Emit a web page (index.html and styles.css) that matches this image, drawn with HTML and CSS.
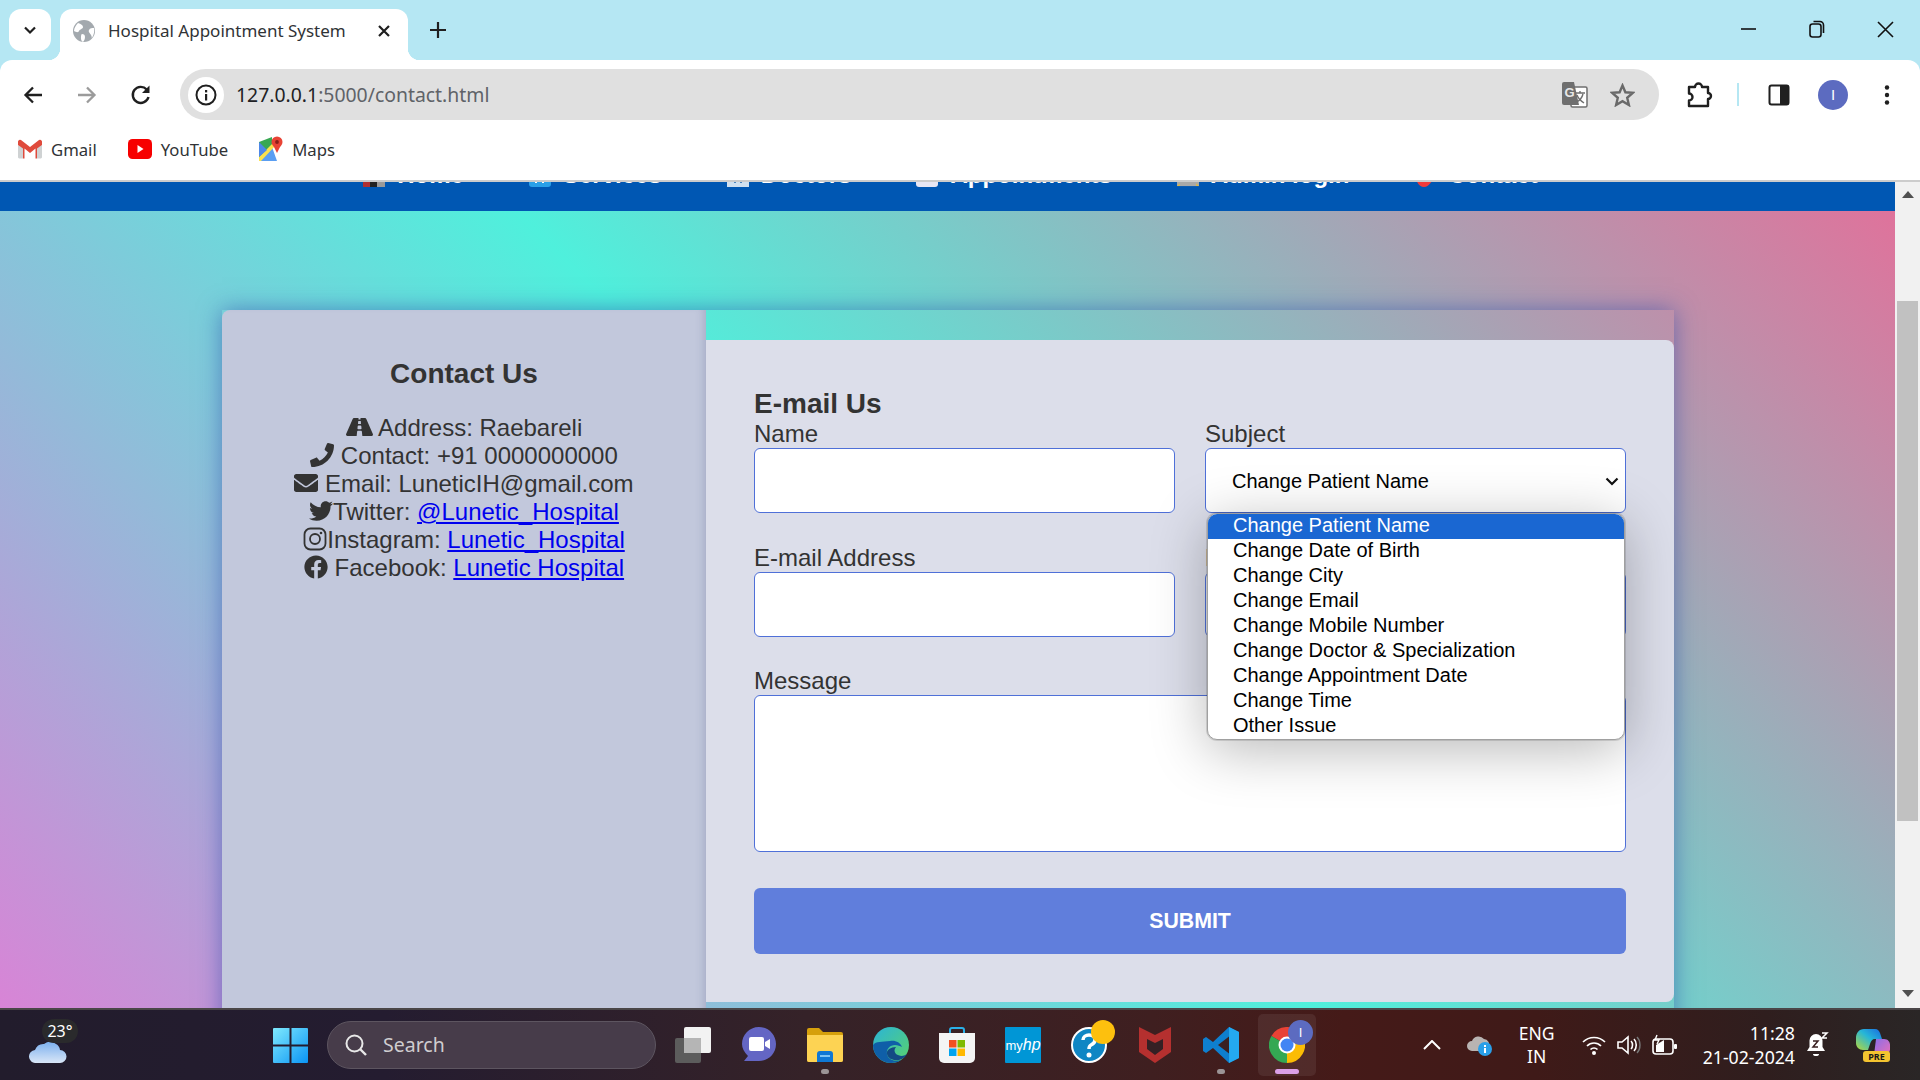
FILE: index.html
```html
<!DOCTYPE html>
<html lang="en">
<head>
  <meta charset="UTF-8">
  <meta name="viewport" content="width=device-width, initial-scale=1.0">
  <title>Hospital Appointment System</title>
  <link rel="stylesheet" href="styles.css">
</head>
<body>
<div class="screen">

  <!-- browser frame -->
  <header class="browser">
    <div class="tabstrip">
      <button class="tab-search"><svg width="16" height="16" viewBox="0 0 16 16"><path d="M3 5.5l5 5 5-5" fill="none" stroke="#1f1f1f" stroke-width="2.2"/></svg></button>
      <div class="tab">
        <svg class="favicon" width="22" height="22" viewBox="0 0 22 22"><circle cx="11" cy="11" r="11" fill="#a3a9ae"/><path d="M5 3c3 1 5 2 5 4s-3 2-4 4-3 1-5 0c0-3 2-6 4-8zM21 8c-2 0-4 0-5 2s1 3 2 5 1 3 0 4c2-2 4-7 3-11zM9 14c2 0 3 1 3 3s-1 4-2 5c-2-1-2-3-2-4s0-4 1-4z" fill="#fff"/></svg>
        <span class="tab-title">Hospital Appointment System</span>
        <svg class="tab-close" width="14" height="14" viewBox="0 0 14 14"><path d="M2 2l10 10M12 2L2 12" stroke="#1f1f1f" stroke-width="2.2"/></svg>
      </div>
      <svg class="new-tab" width="18" height="18" viewBox="0 0 18 18"><path d="M9 1v16M1 9h16" stroke="#1f1f1f" stroke-width="2.2"/></svg>
      <div class="window-controls">
        <svg width="16" height="16" viewBox="0 0 16 16"><path d="M0 8h15" stroke="#111" stroke-width="1.6"/></svg>
        <svg width="16" height="18" viewBox="0 0 16 18"><rect x="1" y="4" width="11" height="13" rx="2.5" fill="none" stroke="#111" stroke-width="1.6"/><path d="M4.5 1.5h6.5a3.5 3.5 0 0 1 3.5 3.5v8" fill="none" stroke="#111" stroke-width="1.6"/></svg>
        <svg width="17" height="17" viewBox="0 0 17 17"><path d="M1 1l15 15M16 1L1 16" stroke="#111" stroke-width="1.6"/></svg>
      </div>
    </div>

    <div class="toolbar">
      <svg class="nav-btn" width="22" height="22" viewBox="0 0 22 22"><path d="M20 11H4M11 3.5L3.5 11l7.5 7.5" fill="none" stroke="#1f1f1f" stroke-width="2.3"/></svg>
      <svg class="nav-btn" width="22" height="22" viewBox="0 0 22 22"><path d="M2 11h16M11 3.5l7.5 7.5-7.5 7.5" fill="none" stroke="#9b9b9b" stroke-width="2.3"/></svg>
      <svg class="nav-btn" width="22" height="22" viewBox="0 0 22 22"><path d="M18.5 13a8 8 0 1 1-1.8-7.5" fill="none" stroke="#1f1f1f" stroke-width="2.4"/><path d="M19.5 1.5V9H12z" fill="#1f1f1f"/></svg>
      <div class="omnibox">
        <span class="site-info"><svg width="22" height="22" viewBox="0 0 22 22"><circle cx="11" cy="11" r="9.5" fill="none" stroke="#1f1f1f" stroke-width="2"/><rect x="10" y="10" width="2.2" height="6.5" fill="#1f1f1f"/><rect x="10" y="6" width="2.2" height="2.4" fill="#1f1f1f"/></svg></span>
        <span class="url"><span class="url-host">127.0.0.1</span>:5000/contact.html</span>
        <svg class="translate" width="26" height="28" viewBox="0 0 26 28"><rect x="9" y="6" width="16" height="20" rx="1.5" fill="#fff" stroke="#6f6f6f" stroke-width="1.5"/><path d="M2 1h10l5 23H2a2 2 0 0 1-2-2V3a2 2 0 0 1 2-2z" fill="#6f6f6f"/><text x="2.5" y="16" class="translate-g">G</text><path d="M13 12h10M18 10v2M21 13c-1 4-4 7-7 8M15 14c1 3 4 6 7 8" fill="none" stroke="#6f6f6f" stroke-width="1.4"/></svg>
        <svg class="star" width="25" height="24" viewBox="0 0 25 24"><path d="M12.5 2.5l2.9 6.800 7.400.6-5.600 4.900 1.700 7.200-6.400-3.800-6.400 3.800 1.700-7.200-5.600-4.900 7.400-.6z" fill="none" stroke="#6a6a6a" stroke-width="2.4"/></svg>
      </div>
      <svg class="puzzle" width="26" height="26" viewBox="0 0 26 26"><path d="M2 5h6a3.5 3.5 0 0 1 7 0h6v6a3 3 0 0 1 0 6v7H2v-5.500a3.500 3.500 0 0 0 0-7z" fill="none" stroke="#1f1f1f" stroke-width="2.4" stroke-linejoin="round"/></svg>
      <span class="toolbar-divider"></span>
      <svg class="side-panel" width="22" height="22" viewBox="0 0 22 22"><rect x="1.5" y="1.5" width="19" height="19" rx="2" fill="none" stroke="#1f1f1f" stroke-width="2"/><rect x="12" y="1.5" width="8.5" height="19" fill="#1f1f1f"/></svg>
      <span class="avatar">I</span>
      <svg class="kebab" width="6" height="22" viewBox="0 0 6 22"><circle cx="3" cy="3.5" r="2.2" fill="#1f1f1f"/><circle cx="3" cy="11" r="2.2" fill="#1f1f1f"/><circle cx="3" cy="18.5" r="2.2" fill="#1f1f1f"/></svg>
    </div>

    <div class="bookmarks">
      <a class="bookmark">
        <svg width="24" height="20" viewBox="0 0 24 20"><path d="M1 19.5h4V9L0 6v12.500zM23 19.5h-4V9l5-3v12.500z" fill="#cfd2d3"/><path d="M0 2.500A2 2 0 0 1 3 1l9 7 9-7a2 2 0 0 1 3 1.500V6l-5 3.500v10h-1.500V9.500L12 14 6.500 9.500v10H5v-10L0 6z" fill="#df4a3c"/></svg>
        Gmail
      </a>
      <a class="bookmark">
        <svg width="24" height="20" viewBox="0 0 24 20"><rect width="24" height="20" rx="4.5" fill="#f70000"/><path d="M9.5 6l6 4-6 4z" fill="#fff"/></svg>
        YouTube
      </a>
      <a class="bookmark">
        <svg width="24" height="26" viewBox="0 0 24 26"><path d="M0 6l13-5v24H0z" fill="#38a852"/><path d="M0 25l13-14 5 14z" fill="#5a9ef2"/><path d="M0 21L15 6l2 3L2 25H0z" fill="#fbe14d"/><path d="M0 6l8 8-8 7z" fill="#4d88e8"/><circle cx="18" cy="6" r="5.5" fill="#e84335"/><path d="M14 9l4 8 4-8z" fill="#e84335"/><circle cx="18" cy="6" r="1.9" fill="#8a1f17"/></svg>
        Maps
      </a>
    </div>
  </header>

  <!-- page, scrolled a little down -->
  <div class="viewport">
    <div class="page">
      <nav class="site-nav">
        <a class="nav-item"><svg class="nav-icon" viewBox="0 0 22 22"><rect width="7" height="22" fill="#b03030"/><rect x="7" width="7" height="22" fill="#222"/><rect x="14" width="8" height="22" fill="#999"/></svg>Home</a>
        <a class="nav-item"><svg class="nav-icon" viewBox="0 0 22 22"><rect width="22" height="22" rx="3" fill="#2aa0e8"/><path d="M7 0v18M14 0v18" stroke="#fff" stroke-width="2"/></svg>Services</a>
        <a class="nav-item"><svg class="nav-icon" viewBox="0 0 22 22"><rect width="22" height="22" fill="#cfe0f0"/><path d="M8 0v18M14 0v18" stroke="#4a86c0" stroke-width="2"/></svg>Doctors</a>
        <a class="nav-item"><svg class="nav-icon" viewBox="0 0 22 22"><rect width="22" height="22" rx="3" fill="#e6e6f4"/><path d="M5 16h12" stroke="#777" stroke-width="2" stroke-dasharray="2 2"/></svg>Appointments</a>
        <a class="nav-item"><svg class="nav-icon" viewBox="0 0 24 22"><rect width="24" height="22" fill="#a8a8a8"/><path d="M0 22l3-3v3zM24 22l-3-3v3z" fill="#e2b93b"/></svg>Admin login</a>
        <a class="nav-item"><svg class="nav-icon" viewBox="0 0 22 22"><path d="M0 0h22c0 12-6 22-12 22C4 22 0 14 0 0z" fill="#f03a3a"/></svg>Contact</a>
      </nav>

      <main class="contact-wrap">
        <section class="contact-info">
          <h3>Contact Us</h3>
          <p class="info-line"><svg class="fa road" viewBox="0 0 576 512"><path d="M573.19 402.67l-139.79-320C428.43 71.29 417.6 64 405.68 64h-97.59l2.45 23.16c.5 4.72-3.21 8.84-7.96 8.84h-29.16c-4.75 0-8.46-4.12-7.96-8.84L267.91 64h-97.59c-11.93 0-22.76 7.29-27.73 18.67L2.8 402.67C-6.45 423.86 8.31 448 30.54 448h196.84l10.31-97.68c.86-8.14 7.72-14.32 15.91-14.32h68.8c8.19 0 15.05 6.18 15.91 14.32L348.62 448h196.84c22.23 0 36.99-24.14 27.73-45.33zM260.4 135.16a8 8 0 0 1 7.96-7.16h39.29c4.09 0 7.53 3.09 7.96 7.16l4.6 43.58c.75 7.09-4.81 13.26-11.93 13.26h-40.54c-7.13 0-12.68-6.17-11.93-13.26l4.6-43.58zM315.64 304h-55.29c-9.5 0-16.91-8.23-15.9-17.68l5.07-48c.86-8.14 7.72-14.32 15.91-14.32h45.15c8.19 0 15.05 6.18 15.91 14.32l5.07 48c1 9.45-6.41 17.68-15.92 17.68z"/></svg> Address: Raebareli</p>
          <p class="info-line"><svg class="fa" viewBox="0 0 512 512"><path d="M493.4 24.6l-104-24c-11.3-2.6-22.9 3.3-27.5 13.9l-48 112c-4.2 9.8-1.4 21.3 6.9 28l60.6 49.6c-36 76.7-98.9 140.5-177.2 177.2l-49.6-60.6c-6.8-8.3-18.2-11.1-28-6.9l-112 48C3.9 366.5-2 378.1.6 389.4l24 104C27.1 504.2 36.7 512 48 512c256.1 0 464-207.5 464-464 0-11.2-7.7-20.9-18.6-23.4z"/></svg> Contact: +91 0000000000</p>
          <p class="info-line"><svg class="fa" viewBox="0 0 512 512"><path d="M502.3 190.8c3.9-3.1 9.7-.2 9.7 4.7V400c0 26.5-21.5 48-48 48H48c-26.5 0-48-21.5-48-48V195.6c0-5 5.7-7.8 9.7-4.7 22.4 17.4 52.1 39.5 154.1 113.6 21.1 15.4 56.7 47.8 92.2 47.6 35.7.3 72-32.8 92.3-47.6 102-74.1 131.6-96.3 154-113.7zM256 320c23.2.4 56.6-29.2 73.4-41.4 132.7-96.3 142.8-104.7 173.4-128.7 5.8-4.5 9.2-11.5 9.2-18.9v-19c0-26.5-21.5-48-48-48H48C21.5 64 0 85.5 0 112v19c0 7.4 3.4 14.3 9.2 18.9 30.6 23.9 40.7 32.4 173.4 128.7 16.8 12.2 50.2 41.8 73.4 41.4z"/></svg> Email: LuneticIH@gmail.com</p>
          <p class="info-line"><svg class="fa" viewBox="0 0 512 512"><path d="M459.37 151.716c.325 4.548.325 9.097.325 13.645 0 138.72-105.583 298.558-298.558 298.558-59.452 0-114.68-17.219-161.137-47.106 8.447.974 16.568 1.299 25.34 1.299 49.055 0 94.213-16.568 130.274-44.832-46.132-.975-84.792-31.188-98.112-72.772 6.498.974 12.995 1.624 19.818 1.624 9.421 0 18.843-1.3 27.614-3.573-48.081-9.747-84.143-51.98-84.143-102.985v-1.299c13.969 7.797 30.214 12.67 47.431 13.319-28.264-18.843-46.781-51.005-46.781-87.391 0-19.492 5.197-37.36 14.294-52.954 51.655 63.675 129.3 105.258 216.365 109.807-1.624-7.797-2.599-15.918-2.599-24.04 0-57.828 46.782-104.934 104.934-104.934 30.213 0 57.502 12.67 76.67 33.137 23.715-4.548 46.456-13.32 66.599-25.34-7.798 24.366-24.366 44.833-46.132 57.827 21.117-2.273 41.584-8.122 60.426-16.243-14.292 20.791-32.161 39.308-52.628 54.253z"/></svg>Twitter: <a href="#">@Lunetic_Hospital</a></p>
          <p class="info-line"><svg class="fa" viewBox="0 0 24 24"><rect x="1.5" y="1.5" width="21" height="21" rx="6" fill="none" stroke="#333" stroke-width="1.8"/><circle cx="12" cy="12" r="5" fill="none" stroke="#333" stroke-width="1.8"/><circle cx="18" cy="6" r="1.3"/></svg>Instagram: <a href="#">Lunetic_Hospital</a></p>
          <p class="info-line"><svg class="fa" viewBox="0 0 512 512"><path d="M504 256C504 119 393 8 256 8S8 119 8 256c0 123.78 90.69 226.38 209.25 245V327.69h-63V256h63v-54.64c0-62.15 37-96.48 93.67-96.48 27.14 0 55.52 4.84 55.52 4.84v61h-31.28c-30.8 0-40.41 19.12-40.41 38.73V256h68.78l-11 71.69h-57.78V501C413.31 482.38 504 379.78 504 256z"/></svg> Facebook: <a href="#">Lunetic Hospital</a></p>
        </section>

        <section class="contact-form">
          <h3>E-mail Us</h3>
          <form class="form-grid">
            <div class="field">
              <label>Name</label>
              <input type="text">
            </div>
            <div class="field subject-field">
              <label>Subject</label>
              <select>
                <option>Change Patient Name</option>
              </select>
              <svg class="select-arrow" width="14" height="9" viewBox="0 0 14 9"><path d="M1.5 1.5L7 7l5.500-5.500" fill="none" stroke="#111" stroke-width="2.2"/></svg>
              <!-- the open list of the select -->
              <ul class="select-popup">
                <li class="selected">Change Patient Name</li>
                <li>Change Date of Birth</li>
                <li>Change City</li>
                <li>Change Email</li>
                <li>Change Mobile Number</li>
                <li>Change Doctor &amp; Specialization</li>
                <li>Change Appointment Date</li>
                <li>Change Time</li>
                <li>Other Issue</li>
              </ul>
            </div>
            <div class="field">
              <label>E-mail Address</label>
              <input type="text">
            </div>
            <div class="field">
              <label>Phone</label>
              <input type="text">
            </div>
            <div class="field field-wide">
              <label>Message</label>
              <textarea></textarea>
            </div>
            <button type="button" class="submit-btn">SUBMIT</button>
          </form>
        </section>
      </main>
    </div>

    <div class="scrollbar">
      <span class="arrow-up"></span>
      <span class="thumb"></span>
      <span class="arrow-down"></span>
    </div>
  </div>

  <!-- windows taskbar -->
  <footer class="taskbar">
    <div class="weather">
      <span class="temp">23°</span>
      <svg class="weather-cloud" width="38" height="24" viewBox="0 0 38 24"><defs><linearGradient id="cloud" x1="0" y1="0" x2="0" y2="1"><stop offset="0" stop-color="#7cb0ee"/><stop offset="1" stop-color="#d9e6f7"/></linearGradient></defs><path d="M7 24a6.5 6.5 0 0 1-1-13 9 9 0 0 1 9-6 10 10 0 0 1 12 0 8 8 0 0 1 4 6 6.5 6.5 0 0 1 0 13z" fill="url(#cloud)"/></svg>
    </div>
    <div class="start-btn">
      <svg width="35" height="35" viewBox="0 0 35 35"><defs><linearGradient id="win" x1="0" y1="0" x2="1" y2="1"><stop offset="0" stop-color="#7fe9fd"/><stop offset="1" stop-color="#0a94f5"/></linearGradient></defs><path d="M0 1a1 1 0 0 1 1-1h15.500v16.500H0zM18.500 0H34a1 1 0 0 1 1 1v15.500H18.500zM0 18.500h16.500V35H1a1 1 0 0 1-1-1zM18.500 18.500H35V34a1 1 0 0 1-1 1H18.500z" fill="url(#win)"/></svg>
    </div>
    <div class="search-box">
      <svg width="24" height="24" viewBox="0 0 24 24"><circle cx="10.5" cy="10.5" r="8" fill="none" stroke="#e8e8e8" stroke-width="2"/><path d="M16 16l6 6" stroke="#e8e8e8" stroke-width="2.4"/></svg>
      <span>Search</span>
    </div>
    <div class="task-icons">
      <div class="task-btn">
        <svg width="36" height="36" viewBox="0 0 36 36"><rect y="11" width="26" height="25" rx="2" fill="#5c5c5c"/><rect x="9" width="27" height="26" rx="2" fill="#f2f2f2"/><rect x="9" y="11" width="17" height="15" fill="#b5b5b5"/></svg>
      </div>
      <div class="task-btn">
        <svg width="34" height="36" viewBox="0 0 34 36"><path d="M17 0c10 0 17 8 17 17 0 10-8 17-17 17H2l4-5C2 25 0 21 0 17 0 8 7 0 17 0z" fill="#6466c4"/><rect x="7" y="10" width="15" height="14" rx="2" fill="#fff"/><path d="M23 15l5-3v10l-5-3z" fill="#fff"/></svg>
      </div>
      <div class="task-btn running">
        <svg width="36" height="34" viewBox="0 0 36 34"><path d="M0 2a2 2 0 0 1 2-2h10l4 4h18a2 2 0 0 1 2 2v26a2 2 0 0 1-2 2H2a2 2 0 0 1-2-2z" fill="#d6a00c"/><path d="M0 7h36v25a2 2 0 0 1-2 2H2a2 2 0 0 1-2-2z" fill="#fdd353"/><path d="M10 34v-8a3 3 0 0 1 3-3h10a3 3 0 0 1 3 3v8z" fill="#0f78d4"/><rect x="13" y="27" width="10" height="2" fill="#7cc4f4"/></svg>
      </div>
      <div class="task-btn">
        <svg width="36" height="36" viewBox="0 0 36 36"><defs><linearGradient id="edge" x1="0" y1="0" x2="1" y2="1"><stop offset="0" stop-color="#2bb4d8"/><stop offset="1" stop-color="#5ad36a"/></linearGradient></defs><circle cx="18" cy="18" r="18" fill="url(#edge)"/><path d="M0 18C0 28 8 36 18 36c4 0 8-1 10-3-6 2-13 0-14-6-1-5 3-9 8-9 3 0 5 1 7 2-2-5-7-7-12-6C9 15 3 14 0 18z" fill="#0f5fa8"/><path d="M14 27c1 5 7 7 12 6 4-1 7-4 8-6-4 3-8 2-11 0-2-2-2-5 0-7-5 0-10 3-9 7z" fill="#134a84"/></svg>
      </div>
      <div class="task-btn">
        <svg width="36" height="36" viewBox="0 0 36 36"><path d="M11 8V3a2 2 0 0 1 2-2h10a2 2 0 0 1 2 2v5" fill="none" stroke="#2ab0e8" stroke-width="2"/><path d="M0 6h36v25a5 5 0 0 1-5 5H5a5 5 0 0 1-5-5z" fill="#f4f4f4"/><rect x="10" y="13" width="7.5" height="7.5" fill="#f25022"/><rect x="18.5" y="13" width="7.5" height="7.5" fill="#7fba00"/><rect x="10" y="21.5" width="7.5" height="7.5" fill="#00a4ef"/><rect x="18.5" y="21.5" width="7.5" height="7.5" fill="#ffb900"/></svg>
      </div>
      <div class="task-btn">
        <div class="myhp"><span class="my">my</span><span class="hp">hp</span></div>
      </div>
      <div class="task-btn">
        <span class="icon-wrap">
          <svg width="36" height="36" viewBox="0 0 36 36"><circle cx="18" cy="18" r="17" fill="#0f86c4" stroke="#fff" stroke-width="2"/><path d="M12 13c0-3 3-5 6-5s6 2 6 5-2 4-4 5-2 2-2 4" fill="none" stroke="#fff" stroke-width="3.5"/><circle cx="18" cy="28" r="2.5" fill="#fff"/></svg>
          <span class="help-badge"></span>
        </span>
      </div>
      <div class="task-btn">
        <svg width="32" height="36" viewBox="0 0 32 36"><path d="M0 0l16 8 16-8v25L16 36 0 25z" fill="#b5302f"/><path d="M8 12l8 4 8-4v10l-8 6-8-6z" fill="#352024"/></svg>
      </div>
      <div class="task-btn running">
        <svg width="36" height="36" viewBox="0 0 36 36"><path d="M26 0l10 5v26l-10 5L10 21l-7 5-3-2v-12l3-2 7 5z" fill="#0e7fcf"/><path d="M26 0l10 5v26l-10 5z" fill="#24a9f0"/><path d="M26 9.5L15 18l11 8.5z" fill="#3a2122"/></svg>
      </div>
      <div class="task-btn active">
        <span class="icon-wrap">
          <svg width="36" height="36" viewBox="0 0 36 36"><path d="M18 18L2.4 9A18 18 0 0 1 33.6 9z" fill="#e94235"/><path d="M18 18L33.6 9A18 18 0 0 1 18 36z" fill="#fbbc04"/><path d="M18 18L18 36A18 18 0 0 1 2.4 9z" fill="#34a853"/><circle cx="18" cy="18" r="8.5" fill="#fff"/><circle cx="18" cy="18" r="6.5" fill="#4285f4"/></svg>
          <span class="chrome-badge">I</span>
        </span>
      </div>
    </div>

    <div class="tray">
      <svg class="tray-chevron" width="18" height="10" viewBox="0 0 18 10"><path d="M1 9l8-8 8 8" fill="none" stroke="#fff" stroke-width="2"/></svg>
      <span class="tray-cloud">
        <svg width="26" height="24" viewBox="0 0 26 24"><path d="M5 18a5 5 0 0 1 0-10 7 7 0 0 1 12-2 6 6 0 0 1 5 8v4z" fill="#b9b4b2"/><circle cx="18" cy="16" r="7" fill="#2a9fe8"/><rect x="17" y="15" width="2" height="5" fill="#fff"/><rect x="17" y="12" width="2" height="2" fill="#fff"/></svg>
      </span>
      <div class="lang">ENG<br>IN</div>
      <svg class="tray-icon" width="24" height="20" viewBox="0 0 24 20"><path d="M1 7c6-6 16-6 22 0M5 11c4-4 10-4 14 0M8.5 14.5c2-2 5-2 7 0" fill="none" stroke="#fff" stroke-width="1.7"/><circle cx="12" cy="18" r="2" fill="#fff"/></svg>
      <svg class="tray-icon" width="24" height="20" viewBox="0 0 24 20"><path d="M1 7h4l6-5v16l-6-5H1z" fill="none" stroke="#fff" stroke-width="1.6"/><path d="M14 6c2 2 2 6 0 8M17 4c3 3 3 9 0 12" fill="none" stroke="#fff" stroke-width="1.6"/><path d="M20 2c4 4 4 12 0 16" fill="none" stroke="#777" stroke-width="1.4"/></svg>
      <svg class="tray-icon" width="26" height="22" viewBox="0 0 26 22"><rect x="1" y="5" width="20" height="15" rx="3" fill="none" stroke="#fff" stroke-width="1.6"/><rect x="22" y="10" width="3" height="5" rx="1" fill="#fff"/><path d="M4 18V11l8-5v12z" fill="#fff"/><path d="M5 1L3 6h4L5 10" fill="none" stroke="#fff" stroke-width="1.4"/></svg>
      <div class="clock"><span>11:28</span><span>21-02-2024</span></div>
      <svg class="bell" width="22" height="26" viewBox="0 0 22 26"><path d="M9 2a6.5 6.5 0 0 0-6.500 6.500V15L0 19h18l-2.500-4V8.500A6.500 6.500 0 0 0 9 2z" fill="#fff"/><path d="M6 22h6a3 2 0 0 1-6 0z" fill="#fff"/><path d="M6 9h5l-5 6h5" fill="none" stroke="#3a2020" stroke-width="1.5"/><path d="M15 1h5l-5 5h5" fill="none" stroke="#fff" stroke-width="1.5"/></svg>
      <span class="copilot">
        <svg width="34" height="26" viewBox="0 0 34 26"><defs><linearGradient id="cop-a" x1="0" y1="1" x2="1" y2="0"><stop offset="0" stop-color="#b6d83a"/><stop offset=".55" stop-color="#26b6d8"/><stop offset="1" stop-color="#1a68e0"/></linearGradient><linearGradient id="cop-b" x1="0" y1="0" x2="1" y2="1"><stop offset="0" stop-color="#8a6ee8"/><stop offset="1" stop-color="#e870b8"/></linearGradient></defs><path d="M20 10h8c4 0 6 3 6 6v4c0 3-2 6-6 6H18z" fill="url(#cop-b)"/><path d="M8 0h11c3 0 4 2 5 4l2 6h-7c-3 0-4 2-5 5l-2 6H7c-4 0-7-3-7-7V9c0-5 3-9 8-9z" fill="url(#cop-a)"/></svg>
        <span class="pre-badge">PRE</span>
      </span>
    </div>
  </footer>
</div>
</body>
</html>
```
FILE: styles.css
```css
* {
  box-sizing: border-box;
}

html, body {
  margin: 0;
  height: 100%;
  overflow: hidden;
}

body {
  font-family: "Liberation Sans", Arial, sans-serif;
}

.screen {
  display: flex;
  flex-direction: column;
  height: 100vh;
}

/* browser frame */
.browser {
  flex: none;
  background-color: #b5e7f3;
  font-family: "Noto Sans", sans-serif;
}

.tabstrip {
  display: flex;
  align-items: flex-end;
  height: 60px;
  padding-left: 9px;
}

.tab-search {
  width: 42px;
  height: 42px;
  margin-bottom: 9px;
  padding: 0;
  border: none;
  border-radius: 12px;
  background-color: #fff;
  display: flex;
  align-items: center;
  justify-content: center;
}

.tab {
  position: relative;
  display: flex;
  align-items: center;
  width: 348px;
  height: 51px;
  margin-left: 9px;
  padding: 0 17px 8px 13px;
  background-color: #fff;
  border-radius: 12px 12px 0 0;
}

.tab::before,
.tab::after {
  content: "";
  position: absolute;
  bottom: 0;
  width: 12px;
  height: 12px;
}

.tab::before {
  left: -12px;
  background: radial-gradient(circle at 0 0, transparent 12px, #fff 12.5px);
}

.tab::after {
  right: -12px;
  background: radial-gradient(circle at 100% 0, transparent 12px, #fff 12.5px);
}

.tab-title {
  flex: 1;
  margin-left: 13px;
  font-size: 17px;
  color: #303336;
  white-space: nowrap;
}

.new-tab {
  margin: 0 0 21px 21px;
}

.window-controls {
  display: flex;
  align-items: center;
  gap: 52px;
  margin-left: auto;
  margin-right: 26px;
  height: 60px;
  padding-bottom: 2px;
}

.toolbar {
  display: flex;
  align-items: center;
  height: 60px;
  padding: 9px 0 0 22px;
  background-color: #fff;
  border-radius: 12px 12px 0 0;
}

.nav-btn {
  margin-right: 32px;
}

.nav-btn:nth-child(3) {
  margin-right: 28px;
}

.omnibox {
  display: flex;
  align-items: center;
  width: 1479px;
  height: 51px;
  padding-left: 8px;
  background-color: #e0e0e0;
  border-radius: 26px;
}

.site-info {
  display: flex;
  align-items: center;
  justify-content: center;
  width: 36px;
  height: 36px;
  background-color: #fff;
  border-radius: 50%;
}

.url {
  margin-left: 12px;
  font-size: 19.4px;
  color: #5f6368;
  white-space: nowrap;
}

.url-host {
  color: #202124;
}

.translate {
  margin-left: auto;
}

.translate-g {
  font-family: "Liberation Sans", sans-serif;
  font-size: 13px;
  font-weight: bold;
  fill: #e8e8e8;
}

.star {
  margin: 0 24px 0 22px;
}

.puzzle {
  margin-left: 28px;
}

.toolbar-divider {
  width: 2px;
  height: 23px;
  margin-left: 24px;
  background-color: #b5e7f3;
}

.side-panel {
  margin-left: 29px;
}

.avatar {
  display: flex;
  align-items: center;
  justify-content: center;
  width: 30px;
  height: 30px;
  margin-left: 28px;
  border-radius: 50%;
  background-color: #5c6bc0;
  color: #fff;
  font-family: "Liberation Sans", sans-serif;
  font-size: 15px;
}

.kebab {
  margin-left: 36px;
}

.bookmarks {
  display: flex;
  align-items: center;
  height: 62px;
  padding: 0 0 2px 18px;
  background-color: #fff;
  border-bottom: 2px solid #ccc;
}

.bookmark {
  display: flex;
  align-items: center;
  gap: 9px;
  margin-right: 31px;
  font-size: 16.7px;
  color: #303336;
}

/* page */
.viewport {
  flex: 1;
  min-height: 0;
  display: flex;
}

.page {
  flex: 1;
  min-width: 0;
  overflow: hidden;
  background: linear-gradient(45deg, #d884d6, #4ff0dc 48.3%, #e2709a);
}

.site-nav {
  height: 29px;
  overflow: hidden;
  display: flex;
  justify-content: center;
  gap: 65px;
  padding-left: 6px;
  background-color: #0057b3;
}

.nav-item {
  flex: none;
  display: flex;
  align-items: baseline;
  gap: 12px;
  height: 32px;
  margin-top: -23px;
  color: #fff;
  font-size: 24px;
  font-weight: bold;
  line-height: 32px;
}

.nav-icon {
  width: 22px;
  height: 22px;
  transform: translateY(4px);
}

.contact-wrap {
  display: flex;
  width: 1452px;
  height: 780px;
  margin: 99px 0 0 222px;
  box-shadow: 0 0 22px rgba(40, 70, 170, 0.55);
  color: #333;
}

.contact-info {
  flex: 0 0 484px;
  padding-top: 48px;
  background-color: #c2c8dc;
  border-radius: 8px 0 0 0;
  box-shadow: inset -8px 0 8px -6px rgba(60, 70, 120, 0.22);
  text-align: center;
}

.contact-info h3,
.contact-form h3 {
  margin: 0;
  font-size: 28px;
  line-height: 32px;
  font-weight: bold;
}

.contact-info h3 {
  margin-bottom: 24px;
}

.info-line {
  margin: 0;
  font-size: 24px;
  line-height: 28px;
  white-space: nowrap;
}

.info-line a {
  color: #0000ee;
}

.fa {
  width: 24px;
  height: 24px;
  vertical-align: -3px;
  fill: #333;
}

.fa.road {
  width: 27px;
}

.contact-form {
  flex: 1;
  align-self: flex-start;
  margin-top: 30px;
  padding: 48px;
  background-color: #dcdeea;
  border-radius: 0 8px 8px 0;
}

.form-grid {
  display: grid;
  grid-template-columns: 421px 421px;
  column-gap: 30px;
  row-gap: 30.5px;
}

.field label {
  display: block;
  font-size: 24px;
  line-height: 28px;
}

.field input,
.field select,
.field textarea {
  display: block;
  width: 100%;
  height: 65px;
  border: 1px solid #4f70d8;
  border-radius: 6px;
  background-color: #fff;
  font-family: "Liberation Sans", Arial, sans-serif;
  font-size: 20px;
  color: #000;
  resize: none;
}

.field select {
  appearance: none;
  padding-left: 26px;
}

.select-arrow {
  position: absolute;
  right: 7px;
  top: 57px;
}

.field-wide {
  grid-column: 1 / 3;
}

.field textarea {
  height: 157px;
}

.subject-field {
  position: relative;
}

/* open dropdown, painted over the fields below it */
.select-popup {
  position: absolute;
  z-index: 5;
  left: 2px;
  top: 93px;
  width: 418px;
  margin: 0;
  padding: 0;
  list-style: none;
  overflow: hidden;
  background-color: #fff;
  border: 1px solid #a0a0a0;
  border-radius: 10px;
  box-shadow: 0 0 0 1px rgba(0, 0, 0, 0.12), 0 10px 55px rgba(0, 0, 0, 0.28);
  font-size: 20px;
  color: #000;
}

.select-popup li {
  height: 25px;
  padding-left: 25px;
  line-height: 23px;
}

.select-popup .selected {
  background-color: #1a67d2;
  color: #fff;
}

.submit-btn {
  grid-column: 1 / 3;
  height: 66px;
  margin-top: 5.5px;
  border: none;
  border-radius: 6px;
  background-color: #607edc;
  color: #fff;
  font-family: "Liberation Sans", Arial, sans-serif;
  font-size: 21.3px;
  font-weight: bold;
}

.scrollbar {
  flex: 0 0 25px;
  display: flex;
  flex-direction: column;
  align-items: center;
  background-color: #f1f1f1;
  padding-top: 9px;
}

.arrow-up,
.arrow-down {
  width: 0;
  height: 0;
  border-left: 6px solid transparent;
  border-right: 6px solid transparent;
}

.arrow-up {
  border-bottom: 7px solid #505050;
}

.arrow-down {
  margin-top: 169px;
  border-top: 7px solid #505050;
}

.thumb {
  width: 21px;
  height: 520px;
  margin-top: 103px;
  background-color: #c1c1c1;
}

/* taskbar */
.taskbar {
  flex: none;
  display: flex;
  align-items: center;
  height: 72px;
  border-top: 2px solid #4a4648;
  background: linear-gradient(90deg, #221c2c 0, #241c30 20%, #352228 42%, #3f1f20 60%, #451a18 70%, #3f1a18 80%, #2f1e1e 92%, #2a2626 100%);
  color: #fff;
  font-family: "Noto Sans", sans-serif;
}

.weather {
  position: relative;
  flex: 0 0 257px;
  height: 70px;
}

.weather-cloud {
  position: absolute;
  left: 29px;
  top: 29px;
}

.temp {
  position: absolute;
  z-index: 1;
  left: 42px;
  top: 9px;
  width: 36px;
  height: 24px;
  border-radius: 12px;
  background-color: #2a2a2c;
  font-size: 16px;
  line-height: 24px;
  text-align: center;
}

.start-btn {
  flex: 0 0 66px;
  display: flex;
  justify-content: center;
}

.search-box {
  display: flex;
  align-items: center;
  gap: 15px;
  flex: 0 0 329px;
  height: 48px;
  margin: 0 4px;
  padding: 0 0 1px 16px;
  border: 1px solid #5d5560;
  border-radius: 24px;
  background-color: #473c4a;
  color: #cfcdd0;
  font-size: 19.5px;
}

.task-icons {
  display: flex;
}

.task-btn {
  position: relative;
  display: flex;
  align-items: center;
  justify-content: center;
  width: 66px;
  height: 70px;
}

.task-btn.running::after {
  content: "";
  position: absolute;
  left: 29px;
  bottom: 6px;
  width: 8px;
  height: 5px;
  border-radius: 3px;
  background-color: #9b9496;
}

.task-btn.active::before {
  content: "";
  position: absolute;
  left: 4px;
  right: 4px;
  top: 4px;
  bottom: 4px;
  border-radius: 5px;
  background-color: rgba(255, 255, 255, 0.07);
}

.task-btn.active::after {
  content: "";
  position: absolute;
  left: 21px;
  bottom: 6px;
  width: 24px;
  height: 5px;
  border-radius: 3px;
  background-color: #dba0e8;
}

.myhp {
  width: 36px;
  height: 36px;
  padding-top: 11px;
  background-color: #0096d6;
  border-radius: 1px;
  text-align: center;
  font-family: "Liberation Sans", sans-serif;
  font-size: 13px;
  line-height: 14px;
  white-space: nowrap;
}

.myhp .hp {
  font-size: 16px;
  font-style: italic;
}

.icon-wrap {
  position: relative;
  z-index: 1;
  display: block;
  width: 36px;
  height: 36px;
}

.help-badge {
  position: absolute;
  left: 20px;
  top: -7px;
  width: 24px;
  height: 24px;
  border-radius: 50%;
  background-color: #fdc00e;
}

.chrome-badge {
  position: absolute;
  left: 19px;
  top: -7px;
  width: 25px;
  height: 25px;
  border-radius: 50%;
  background-color: #5c6bc0;
  font-family: "Liberation Sans", sans-serif;
  font-size: 13px;
  line-height: 25px;
  text-align: center;
}

.tray {
  display: flex;
  align-items: center;
  margin-left: auto;
}

.tray-chevron {
  margin-right: 26px;
}

.tray-cloud {
  display: flex;
  margin-right: 24px;
}

.lang {
  width: 40px;
  margin-right: 25px;
  font-size: 17.5px;
  line-height: 23px;
  text-align: center;
}

.tray-icon {
  margin-right: 11px;
}

.clock {
  display: flex;
  flex-direction: column;
  align-items: flex-end;
  margin-left: 14px;
  font-size: 17.7px;
  line-height: 24px;
}

.bell {
  margin: 0 27px 0 12px;
}

.copilot {
  position: relative;
  display: block;
  width: 34px;
  height: 32px;
  margin-right: 30px;
}

.pre-badge {
  position: absolute;
  left: 7px;
  bottom: -1px;
  width: 27px;
  height: 11px;
  border-radius: 3px;
  background-color: #f4c430;
  color: #1a1a1a;
  font-size: 9px;
  font-weight: bold;
  line-height: 11px;
  text-align: center;
}
```
